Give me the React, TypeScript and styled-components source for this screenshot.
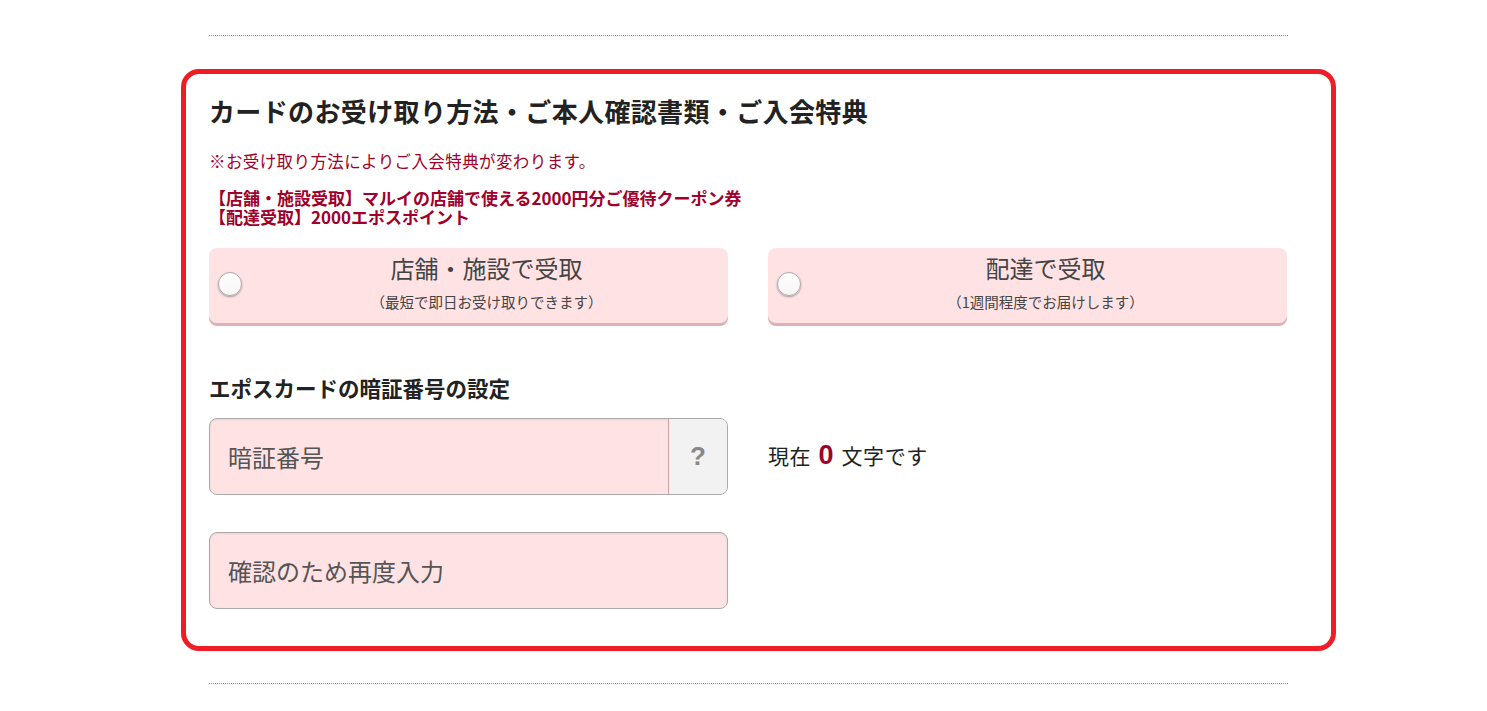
import styled, { createGlobalStyle } from 'styled-components';

const GlobalStyle = createGlobalStyle`
  html, body {
    margin: 0;
    padding: 0;
    background: #fff;
  }
  body {
    font-family: "Noto Sans CJK JP", "Noto Sans", sans-serif;
    color: #222;
  }
`;

type ReceiveOption = {
  title: string;
  note: string;
};

const options: ReceiveOption[] = [
  { title: '店舗・施設で受取', note: '（最短で即日お受け取りできます）' },
  { title: '配達で受取', note: '（1週間程度でお届けします）' },
];

export default function App() {
  return (
    <>
      <GlobalStyle />
      <Page>
        <Rule $top={35} />
        <Box>
          <Title>カードのお受け取り方法・ご本人確認書類・ご入会特典</Title>
          <Notice>※お受け取り方法によりご入会特典が変わります。</Notice>
          <Benefits>
            <li>【店舗・施設受取】マルイの店舗で使える2000円分ご優待クーポン券</li>
            <li>【配達受取】2000エポスポイント</li>
          </Benefits>
          <OptionGrid>
            {options.map((o) => (
              <OptionCard key={o.title}>
                <HiddenRadio type="radio" name="receive" />
                <RadioMark />
                <OptionTitle>{o.title}</OptionTitle>
                <OptionNote>{o.note}</OptionNote>
              </OptionCard>
            ))}
          </OptionGrid>

          <SubHeading>エポスカードの暗証番号の設定</SubHeading>
          <PinRow>
            <Field>
              <TextInput type="password" placeholder="暗証番号" />
              <HelpButton type="button">?</HelpButton>
            </Field>
            <Counter>
              現在 <Count>0</Count> 文字です
            </Counter>
          </PinRow>
          <ConfirmRow>
            <Field>
              <TextInput type="password" placeholder="確認のため再度入力" />
            </Field>
          </ConfirmRow>
        </Box>
        <Rule $top={32} />
      </Page>
    </>
  );
}

const Page = styled.div`
  margin-left: 181px;
  width: 1155px;
  padding-bottom: 26px;
`;

const Rule = styled.hr<{ $top: number }>`
  margin: ${({ $top }) => $top}px 0 0 28px;
  width: 1079px;
  height: 0;
  border: 0;
  border-top: 1px dotted #888;
  &:first-child {
    margin-bottom: 33px;
  }
`;

const Box = styled.section`
  box-sizing: border-box;
  width: 1155px;
  border: 5px solid #ee1d26;
  border-radius: 18px;
  padding: 19px 43px 37px 23px;
`;

const Title = styled.h2`
  margin: 0;
  font-size: 26px;
  line-height: 36px;
  font-weight: 700;
  letter-spacing: 0.36px;
  color: #222;
`;

const Notice = styled.p`
  margin: 20px 0 0;
  font-size: 16.5px;
  line-height: 24px;
  letter-spacing: 0.4px;
  color: #a1002b;
`;

const Benefits = styled.ul`
  margin: 15px 0 0;
  padding: 0;
  list-style: none;
  li {
    font-size: 17px;
    line-height: 19px;
    font-weight: 700;
    color: #a1002b;
  }
`;

const OptionGrid = styled.div`
  display: grid;
  grid-template-columns: 519px 519px;
  gap: 40px;
  margin-top: 22px;
`;

const OptionCard = styled.label`
  position: relative;
  box-sizing: border-box;
  height: 75px;
  border-radius: 8px;
  background: #ffe3e4;
  box-shadow: 0 3px 0 #dcb1b3;
  padding: 5px 0 0 36px;
  display: flex;
  flex-direction: column;
  align-items: center;
  cursor: pointer;
`;

const HiddenRadio = styled.input`
  position: absolute;
  opacity: 0;
  pointer-events: none;
`;

const RadioMark = styled.span`
  position: absolute;
  left: 9px;
  top: 24px;
  box-sizing: border-box;
  width: 24px;
  height: 24px;
  border-radius: 50%;
  background: linear-gradient(#fff, #f6f6f6);
  border: 1px solid #aaa;
  box-shadow: 0 1px 2px rgba(0, 0, 0, 0.35);
`;

const OptionTitle = styled.span`
  font-size: 24px;
  line-height: 30px;
  color: #444;
`;

const OptionNote = styled.span`
  margin-top: 9px;
  font-size: 14.5px;
  line-height: 20px;
  color: #444;
`;

const SubHeading = styled.h3`
  margin: 50px 0 0;
  font-size: 21.5px;
  line-height: 30px;
  font-weight: 700;
  color: #222;
`;

const PinRow = styled.div`
  display: flex;
  align-items: center;
  gap: 40px;
  margin-top: 15px;
`;

const ConfirmRow = styled.div`
  margin-top: 37px;
`;

const Field = styled.div`
  box-sizing: border-box;
  width: 519px;
  height: 77px;
  display: flex;
  border: 1px solid #aaa;
  border-radius: 8px;
  background: #ffe3e4;
  overflow: hidden;
  box-shadow: inset 0 1px 2px rgba(0, 0, 0, 0.08);
`;

const TextInput = styled.input`
  flex: 1;
  min-width: 0;
  border: 0;
  outline: none;
  background: transparent;
  padding: 0 18px;
  font-family: "Noto Sans CJK JP", sans-serif;
  font-size: 24px;
  color: #333;
  &::placeholder {
    color: #555;
  }
`;

const HelpButton = styled.button`
  width: 59px;
  border: 0;
  border-left: 1px solid #d4a2a5;
  background: #f2f2f2;
  font-family: "Liberation Sans", sans-serif;
  font-size: 26px;
  font-weight: 700;
  color: #888;
  padding: 0;
  cursor: pointer;
`;

const Counter = styled.p`
  margin: 0 0 4px;
  font-size: 21px;
  line-height: 30px;
  letter-spacing: 0.6px;
  color: #222;
`;

const Count = styled.strong`
  font-family: "Liberation Sans", sans-serif;
  font-size: 27px;
  font-weight: 700;
  color: #a1002b;
  margin: 0 2px;
`;
